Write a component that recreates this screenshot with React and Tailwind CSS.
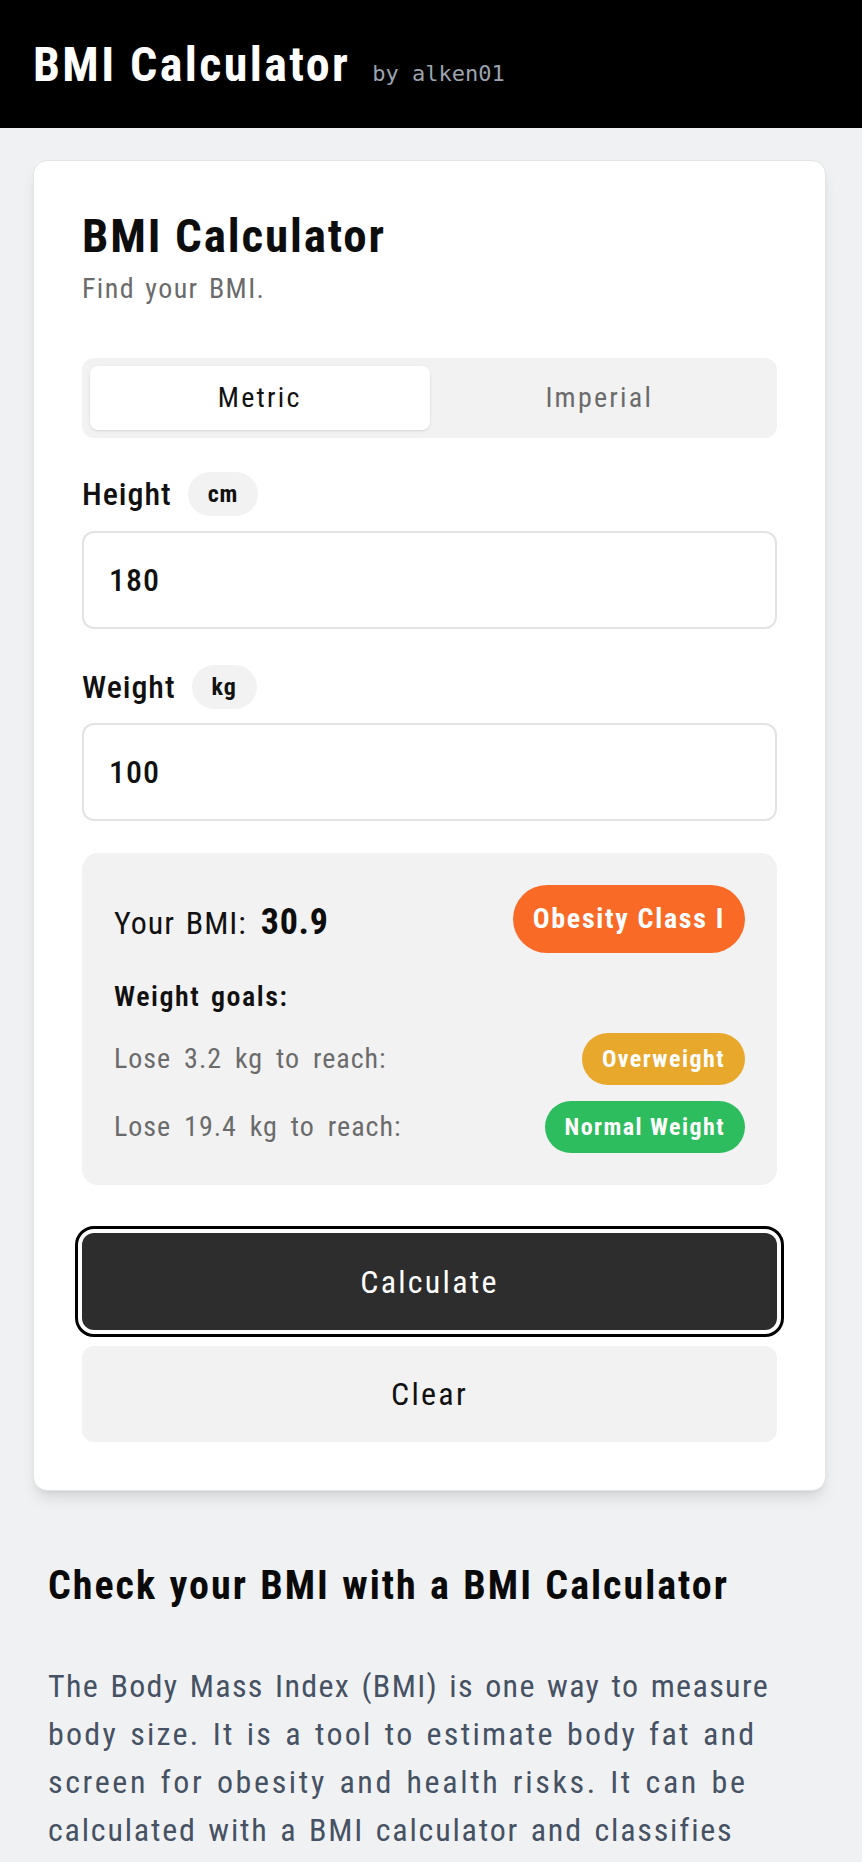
function Pill({ className, children }) {
  return (
    <span className={"inline-flex items-center justify-center rounded-full font-bold text-white tracking-[0.06em] [word-spacing:0] " + className}>
      {children}
    </span>
  );
}

function UnitField({ label, unit, value, rowTop, inputTop }) {
  return (
    <div>
      <div className={"flex items-center gap-4 " + rowTop}>
        <span className="text-[32px] leading-none font-medium text-[#111]">{label}</span>
        <span className="h-[44px] px-5 inline-flex items-center rounded-full bg-[#f2f2f2] text-[24px] font-bold text-[#111]">
          {unit}
        </span>
      </div>
      <input
        type="text"
        defaultValue={value}
        className={"block w-full h-[98px] rounded-xl border-2 border-[#e3e3e3] bg-white px-[25px] text-[32px] font-medium text-[#111] outline-none " + inputTop}
      />
    </div>
  );
}

function GoalRow({ amount, label, color, className }) {
  return (
    <div className={"flex items-center justify-between " + className}>
      <span className="text-[28px] leading-none text-[#6b6b6b] [word-spacing:0.2em]">
        Lose {amount} kg to reach:
      </span>
      <Pill className={"h-[52px] px-5 text-[24px] " + color}>{label}</Pill>
    </div>
  );
}

export default function App() {
  return (
    <div className="min-h-screen bg-[#f0f1f3] font-['Roboto',sans-serif] font-stretch-condensed tracking-[0.06em] [word-spacing:0.16em] text-[#111]">
      <header className="h-[128px] bg-black flex items-center pl-[33px] pt-[3px]">
        <div className="flex items-baseline gap-[22px]">
          <h1 className="text-[48px] leading-none font-bold text-white tracking-[0.05em] [word-spacing:0]">BMI Calculator</h1>
          <span className="font-['DejaVu_Sans_Mono',monospace] font-stretch-normal tracking-normal [word-spacing:0] text-[22px] text-[#9ca3af]">
            by alken01
          </span>
        </div>
      </header>

      <main className="pt-8 pl-[33px] pr-[36px]">
        <section className="bg-white border border-[#e4e4e7] rounded-[14px] shadow-lg p-12">
          <h2 className="text-[47px] leading-[54px] font-bold tracking-[0.04em] [word-spacing:0] text-[#0d0d0d]">BMI Calculator</h2>
          <p className="mt-[6px] text-[28px] leading-[40px] tracking-[0.05em] text-[#6b6b6b]">Find your BMI.</p>

          <div className="mt-[49px] h-[80px] p-2 rounded-xl bg-[#f2f2f2] grid grid-cols-2">
            <button className="rounded-lg bg-white shadow-sm text-[28px] tracking-[0.08em] text-[#111]">Metric</button>
            <button className="rounded-lg text-[28px] tracking-[0.08em] text-[#6b6b6b]">Imperial</button>
          </div>

          <UnitField label="Height" unit="cm" value="180" rowTop="mt-[34px]" inputTop="mt-[15px]" />
          <UnitField label="Weight" unit="kg" value="100" rowTop="mt-[36px]" inputTop="mt-[14px]" />

          <div className="mt-8 rounded-2xl bg-[#f2f2f2] p-8">
            <div className="flex items-center justify-between">
              <div className="flex items-baseline gap-[14px] pt-[5px]">
                <span className="text-[32px] leading-none text-[#111]">Your BMI:</span>
                <span className="text-[36px] leading-none font-bold tracking-[0.02em] text-[#0d0d0d]">30.9</span>
              </div>
              <Pill className="h-[68px] px-5 text-[28px] bg-[#f96a27]">Obesity Class I</Pill>
            </div>

            <p className="mt-6 text-[28px] leading-[40px] font-semibold tracking-[0.055em] text-[#111]">Weight goals:</p>

            <GoalRow amount="3.2" label="Overweight" color="bg-[#e8a82c]" className="mt-4" />
            <GoalRow amount="19.4" label="Normal Weight" color="bg-[#2dbd5e]" className="mt-4" />
          </div>

          <button className="mt-12 block w-full h-[97px] rounded-xl bg-[#2d2d2d] text-[32px] tracking-[0.07em] text-white outline-3 outline-solid outline-black outline-offset-4">
            Calculate
          </button>
          <button className="mt-4 block w-full h-[96px] rounded-xl bg-[#f2f2f2] text-[32px] tracking-[0.07em] text-[#111]">
            Clear
          </button>
        </section>
      </main>

      <section className="px-12 pt-[71px] pb-12">
        <h2 className="text-[40px] leading-[48px] font-bold tracking-[0.05em] [word-spacing:0.03em] text-[#0a0a0a]">
          Check your BMI with a BMI Calculator
        </h2>
        <p className="mt-[52px] text-[32px] leading-[48px] text-[#465263] whitespace-nowrap">
          <span className="block tracking-[0.042em]">The Body Mass Index (BMI) is one way to measure</span>
          <span className="block tracking-[0.07em]">body size. It is a tool to estimate body fat and</span>
          <span className="block tracking-[0.082em]">screen for obesity and health risks. It can be</span>
          <span className="block tracking-[0.056em]">calculated with a BMI calculator and classifies</span>
        </p>
      </section>
    </div>
  );
}
